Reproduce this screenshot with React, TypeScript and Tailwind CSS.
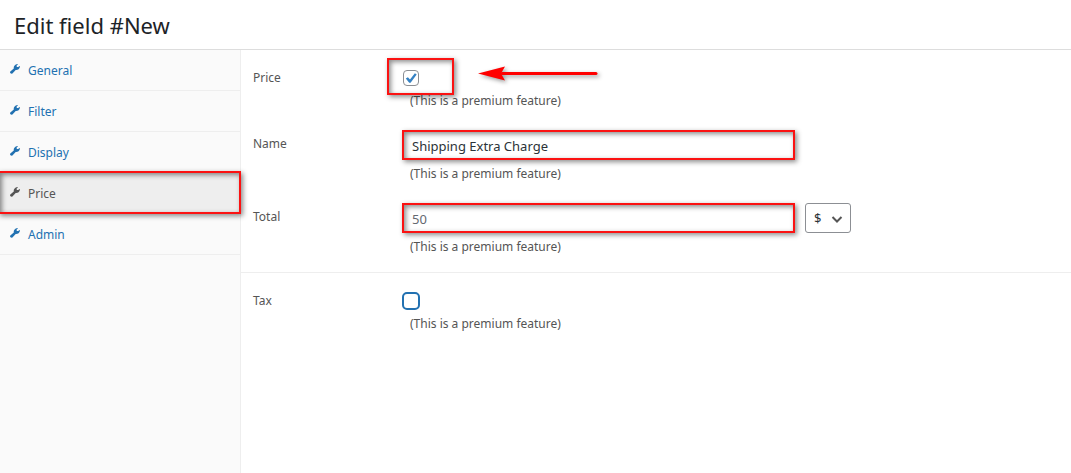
import { useState } from "react";
import type { ReactNode } from "react";

const tabs = ["General", "Filter", "Display", "Price", "Admin"];

const marker =
  "border-2 border-[#fb1212] shadow-[2px_2px_5px_rgba(0,0,0,0.45),inset_2px_2px_5px_rgba(0,0,0,0.45)]";

function WrenchIcon() {
  return (
    <svg
      className="mb-1"
      width="10"
      height="10"
      viewBox="0 0 10 10"
      fill="currentColor"
      aria-hidden="true"
    >
      <path d="M0.3 7.5 3.8 4.6C3.4 2.6 4.6 0.5 7.4 0L7.9 0.5 6.5 1.8 6.9 2.9 8.2 3.1 9.6 2 10 2.5C9.6 5 7.8 6.2 5.7 6L2.4 9.5C1.2 10.3-0.7 8.9 0.3 7.5Z" />
    </svg>
  );
}

function Arrow() {
  return (
    <svg
      className="pointer-events-none absolute top-0 left-[76px] drop-shadow-[2px_2px_2px_rgba(0,0,0,0.4)]"
      width="124"
      height="18"
      viewBox="0 0 124 18"
      aria-hidden="true"
    >
      <path d="M24 7.5H118" stroke="#ff0000" strokeWidth="3" strokeLinecap="round" />
      <path d="M0 7.5 27 0.5 23 7.5 27 14.5Z" fill="#ff0000" />
    </svg>
  );
}

type FieldProps = {
  id: string;
  label: string;
  textInput?: boolean;
  children: ReactNode;
};

function Field({ id, label, textInput, children }: FieldProps) {
  return (
    <div className="flex">
      <label
        htmlFor={id}
        className={textInput ? "w-[149px] shrink-0 leading-7" : "w-[149px] shrink-0 leading-6"}
      >
        {label}
      </label>
      <div className="min-w-0 flex-1">
        {children}
        <p className="pl-2 leading-[18px]">(This is a premium feature)</p>
      </div>
    </div>
  );
}

export default function App() {
  const [active, setActive] = useState("Price");
  const [price, setPrice] = useState(true);
  const [tax, setTax] = useState(false);

  return (
    <div className="flex min-h-screen flex-col bg-white font-['Noto_Sans','Open_Sans',sans-serif] text-[12px] text-[#555]">
      <header className="flex h-[50px] items-center border-b border-[#ddd] px-3.5">
        <h1 className="text-[22px] leading-8 text-[#1d2327]">Edit field #New</h1>
      </header>

      <div className="flex flex-1">
        <nav className="w-[241px] shrink-0 border-r border-[#eee] bg-[#fafafa]">
          {tabs.map((tab) => (
            <a
              key={tab}
              href={`#${tab.toLowerCase()}`}
              onClick={() => setActive(tab)}
              className={
                tab === active
                  ? `relative -mt-0.5 -mr-px -ml-0.5 flex h-[43px] items-center gap-2 bg-[#eee] pt-0.5 pl-2.5 text-[#555] ${marker}`
                  : "flex h-[41px] items-center gap-2 border-b border-[#eee] pt-0.5 pl-2.5 text-[#2271b1]"
              }
            >
              <WrenchIcon />
              {tab}
            </a>
          ))}
        </nav>

        <main className="min-w-0 flex-1">
          <section className="flex flex-col gap-5 px-3 py-4">
            <Field id="price" label="Price">
              <div className="relative mb-0.5 flex h-6 items-center">
                <input
                  id="price"
                  type="checkbox"
                  checked={price}
                  onChange={(e) => setPrice(e.target.checked)}
                  className="peer ml-px size-4 appearance-none rounded border border-[#8c8f94] bg-white"
                />
                <svg
                  className="pointer-events-none absolute left-px hidden size-4 peer-checked:block"
                  viewBox="0 0 16 16"
                  aria-hidden="true"
                >
                  <path d="M2.8 8.4 4.9 7.2 7 9.5 11.9 3.2 13.7 4.5 7.6 12.8H6.2Z" fill="#3582c4" />
                </svg>
                <span
                  className={`pointer-events-none absolute -top-2 -left-[15px] h-[37px] w-[67px] ${marker}`}
                />
                <Arrow />
              </div>
            </Field>

            <Field id="name" label="Name" textInput>
              <input
                id="name"
                type="text"
                defaultValue="Shipping Extra Charge"
                className={`mb-[5px] block h-[30px] w-full max-w-[393px] bg-white px-2 pt-0.5 text-[13px] text-[#2c3338] ${marker}`}
              />
            </Field>

            <Field id="total" label="Total" textInput>
              <div className="mb-[5px] flex gap-2.5">
                <input
                  id="total"
                  type="text"
                  defaultValue="50"
                  className={`block h-[30px] w-full max-w-[393px] bg-white px-2 pt-0.5 text-[13px] text-[#646970] ${marker}`}
                />
                <div className="relative">
                  <select
                    aria-label="Total unit"
                    className="h-[30px] w-[46px] appearance-none rounded-[3px] border border-[#8c8f94] bg-white pt-0.5 pl-2 text-[13px] text-[#2c3338]"
                  >
                    <option>$</option>
                    <option>%</option>
                  </select>
                  <svg
                    className="pointer-events-none absolute top-3 right-2"
                    width="12"
                    height="9"
                    viewBox="0 0 12 9"
                    aria-hidden="true"
                  >
                    <path d="M1.5 2 6 6.5 10.5 2" fill="none" stroke="#555" strokeWidth="2" />
                  </svg>
                </div>
              </div>
            </Field>
          </section>

          <section className="border-t border-[#eee] px-3 pt-4">
            <Field id="tax" label="Tax">
              <div className="mb-0.5 flex h-6 items-center">
                <input
                  id="tax"
                  type="checkbox"
                  checked={tax}
                  onChange={(e) => setTax(e.target.checked)}
                  className="size-[18px] appearance-none rounded-[5px] border-2 border-[#2271b1] bg-white checked:bg-[#3582c4]"
                />
              </div>
            </Field>
          </section>
        </main>
      </div>
    </div>
  );
}
